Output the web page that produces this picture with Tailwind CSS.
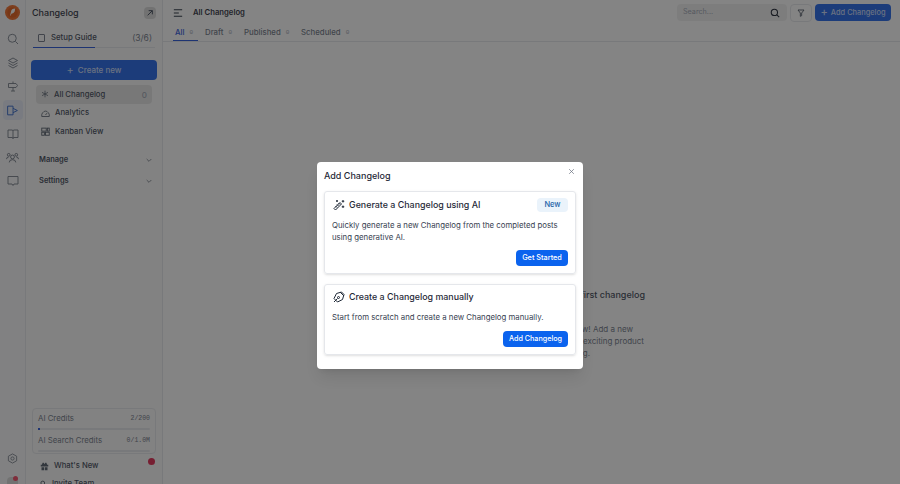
<!DOCTYPE html>
<html><head><meta charset="utf-8"><script src="https://cdn.jsdelivr.net/npm/@tailwindcss/browser@4"></script></head>
<body class="font-['Inter',sans-serif] overflow-hidden">
<div class="relative w-[900px] h-[484px] overflow-hidden bg-white flex text-[#1f2937]">
  <!-- rail -->
  <aside class="w-[26px] h-full shrink-0 border-r border-gray-200 flex flex-col items-center bg-[#f8f9fa] relative">
    <svg class="mt-[5px] shrink-0" width="15" height="15" viewBox="0 0 15 15"><circle cx="7.5" cy="7.5" r="7.5" fill="#f0641e"/><circle cx="7.5" cy="7.5" r="5.2" fill="#e2550f"/><path d="M4.8 11.6 6.3 5.6Q6.9 3.4 10.2 3.4L9.7 6.6Q8.8 8.6 6.5 8.7" fill="#fff"/></svg>
    <div class="mt-[9px] flex flex-col items-center gap-[3.7px] text-[#6b7280]">
      <div class="w-5 h-5 flex items-center justify-center"><svg width="12" height="12" viewBox="0 0 24 24" fill="none" stroke="currentColor" stroke-width="1.8"><circle cx="10.5" cy="10.5" r="8"/><path d="m17 17 5 5"/></svg></div>
      <div class="w-5 h-5 flex items-center justify-center"><svg width="12" height="12" viewBox="0 0 24 24" fill="none" stroke="currentColor" stroke-width="1.8"><path d="m12 2 9 5-9 5-9-5z"/><path d="m3 12 9 5 9-5M3 17l9 5 9-5"/></svg></div>
      <div class="w-5 h-5 flex items-center justify-center"><svg width="12" height="12" viewBox="0 0 24 24" fill="none" stroke="currentColor" stroke-width="1.8"><path d="M12 3v4M12 15v7M3 7h15l3 4-3 4H3zM8 22h8"/></svg></div>
      <div class="w-[20px] h-[20px] rounded bg-[#e6ecf8] flex items-center justify-center text-[#2c62c8]"><svg width="13" height="13" viewBox="0 0 24 24" fill="none" stroke="currentColor" stroke-width="1.8"><path d="M3 4h10v16H3zM13 8l8 4-8 4"/></svg></div>
      <div class="w-5 h-5 flex items-center justify-center"><svg width="12" height="12" viewBox="0 0 24 24" fill="none" stroke="currentColor" stroke-width="1.8"><path d="M2 4h8q2 0 2 2 0-2 2-2h8v15h-8q-2 0-2 2 0-2-2-2H2zM12 6v15"/></svg></div>
      <div class="w-5 h-5 flex items-center justify-center"><svg width="13" height="13" viewBox="0 0 24 24" fill="none" stroke="currentColor" stroke-width="1.8"><circle cx="12" cy="11" r="3.5"/><circle cx="5" cy="7" r="2.5"/><circle cx="19" cy="7" r="2.5"/><path d="M6 21q0-5 6-5t6 5M1 15q0-4 4-4M23 15q0-4-4-4"/></svg></div>
      <div class="w-5 h-5 flex items-center justify-center"><svg width="12" height="12" viewBox="0 0 24 24" fill="none" stroke="currentColor" stroke-width="1.8"><path d="M2 3h20v15H14l-2 3-2-3H2z"/></svg></div>
    </div>
    <div class="mt-auto flex flex-col items-center text-[#6b7280] -mb-[7px] gap-[13px]">
      <svg width="11" height="11" viewBox="0 0 24 24" fill="none" stroke="currentColor" stroke-width="1.8"><circle cx="12" cy="12" r="3.5"/><path d="m12 2 9 5v10l-9 5-9-5V7z"/></svg>
      <div class="w-[11px] h-[14px] bg-[#d8d8d8] rounded-t relative"><span class="absolute -top-px right-0 w-[5px] h-[5px] bg-[#f43f5e] rounded-full"></span></div>
    </div>
  </aside>
  <!-- panel -->
  <aside class="w-[137px] h-full shrink-0 border-r border-gray-200 flex flex-col bg-[#fafafa] relative">
    <div class="h-[25px] pl-[6px] pr-[6px] flex items-center justify-between shrink-0">
      <span class="text-[9px] font-medium text-[#1f2937]">Changelog</span>
      <span class="w-[12px] h-[12px] rounded-sm bg-[#d8d8d8] flex items-center justify-center"><svg width="8" height="8" viewBox="0 0 24 24" fill="none" stroke="#374151" stroke-width="3"><path d="M5 19 19 5M8 5h11v11"/></svg></span>
    </div>
    <div class="mx-[7px] mt-[4px] h-[19px] flex items-center justify-between border-b border-gray-200 relative text-[7.8px] pr-[3px]">
      <span class="flex items-center gap-[6px] pl-[5px] font-medium text-[#374151]"><span class="w-[7px] h-[8px] border border-gray-500 rounded-[1px]"></span>Setup Guide</span>
      <span class="text-gray-500 text-[8.5px]">(3/6)</span>
      <span class="absolute left-0 bottom-[-1px] w-[62px] h-[1.5px] bg-[#1d4ed8]"></span>
    </div>
    <div class="ml-[5px] mr-[5px] mt-[12px] h-[20px] rounded bg-[#1a5fe8] flex items-center justify-center text-[8px] font-medium text-[#c4d7f8] gap-1 shrink-0"><span class="text-[11px] leading-none font-normal">+</span>Create new</div>
    <nav class="mx-[10px] mt-[5px] text-[7.7px] text-[#374151] font-medium">
      <div class="h-[19px] rounded bg-[#e5e5e5] flex items-center justify-between px-[5px]"><span class="flex items-center gap-[5px]"><svg width="8" height="8" viewBox="0 0 24 24" fill="none" stroke="#4b5563" stroke-width="2.2"><path d="M12 2v20M3 7l18 10M21 7 3 17"/></svg>All Changelog</span><span class="text-gray-400 text-[8px]">0</span></div>
      <div class="h-[18.5px] flex items-center gap-[5px] px-[5px]"><svg width="9" height="9" viewBox="0 0 24 24" fill="none" stroke="#4b5563" stroke-width="2.2"><path d="M2 20v-5a7 7 0 0 1 4-6 7 7 0 0 1 12 0 7 7 0 0 1 4 6v5zM12 16l4-5"/></svg>Analytics</div>
      <div class="h-[18.5px] flex items-center gap-[5px] px-[5px]"><svg width="9" height="9" viewBox="0 0 24 24" fill="none" stroke="#4b5563" stroke-width="2.4"><rect x="2" y="3" width="12" height="8"/><rect x="17" y="3" width="5" height="8"/><rect x="2" y="14" width="7" height="8"/><rect x="12" y="14" width="10" height="8"/></svg>Kanban View</div>
    </nav>
    <div class="ml-[13px] mr-[9px] mt-[8px] text-[7.5px] font-semibold text-[#374151]">
      <div class="h-[21px] flex items-center justify-between">Manage<svg width="8" height="8" viewBox="0 0 24 24" fill="none" stroke="#6b7280" stroke-width="2.5"><path d="m5 9 7 7 7-7"/></svg></div>
      <div class="h-[21px] flex items-center justify-between">Settings<svg width="8" height="8" viewBox="0 0 24 24" fill="none" stroke="#6b7280" stroke-width="2.5"><path d="m5 9 7 7 7-7"/></svg></div>
    </div>
    <div class="mt-auto mx-[6px] border border-gray-200 rounded px-[5px] pt-[3px] h-[46px] text-[7.8px] text-gray-500 shrink-0">
      <div class="flex justify-between items-center h-[13px]"><span>AI Credits</span><span class="font-['Liberation_Mono',monospace] text-[6.5px]">2/200</span></div>
      <div class="h-[2px] mt-[3px] rounded bg-gray-200"><div class="h-full w-[2px] bg-[#1d4ed8]"></div></div>
      <div class="flex justify-between items-center h-[13px] mt-[4px]"><span>AI Search Credits</span><span class="font-['Liberation_Mono',monospace] text-[6.5px]">0/1.0M</span></div>
      <div class="h-[2px] mt-[3px] rounded bg-gray-200"></div>
    </div>
    <div class="mx-[14px] mt-[3px] h-[18px] relative flex items-center gap-[5px] text-[7.7px] font-medium text-[#374151] shrink-0"><svg width="9" height="9" viewBox="0 0 24 24" fill="#4b5563"><path d="M7 2h3l2 4 2-4h3l2 5h3v5H2V7h3zM4 14h7v8H4zM13 14h7v8h-7z"/></svg>What's New<span class="absolute right-[-7px] top-[1px] w-[7px] h-[7px] rounded-full bg-[#e11d48]"></span></div>
    <div class="mx-[13px] h-[18px] flex items-center gap-[4px] text-[7.7px] font-medium text-[#374151] shrink-0 -mb-[9px]"><svg width="9" height="9" viewBox="0 0 24 24" fill="none" stroke="#4b5563" stroke-width="2.5"><circle cx="10" cy="8" r="5"/><path d="M2 22q0-7 8-7"/></svg>Invite Team</div>
  </aside>
  <!-- main -->
  <main class="flex-1 min-w-0 flex flex-col">
    <header class="h-[25px] flex items-center pl-[10px] pr-[9px] shrink-0">
      <svg width="10" height="10" viewBox="0 0 24 24" fill="none" stroke="#1f2937" stroke-width="2.5"><path d="M2 4h20M2 12h12M2 20h20"/></svg>
      <span class="ml-[10px] text-[7.7px] font-semibold text-[#1f2937]">All Changelog</span>
      <div class="ml-auto w-[110px] h-[17px] rounded bg-[#f0f0f0] flex items-center justify-between pl-[6px] pr-[7px] text-[7.2px] text-gray-400">Search...<svg width="10" height="10" viewBox="0 0 24 24" fill="none" stroke="#111827" stroke-width="2.5"><circle cx="10.5" cy="10.5" r="7.5"/><path d="m16 16 6 6"/></svg></div>
      <div class="ml-[3px] w-[22px] h-[18px] rounded border border-gray-200 flex items-center justify-center"><svg width="8" height="8" viewBox="0 0 24 24" fill="none" stroke="#374151" stroke-width="2.5"><path d="M3 3h18l-7 9v8l-4 2V12z"/></svg></div>
      <div class="ml-[3px] w-[76px] h-[17px] rounded bg-[#1a5fe8] flex items-center justify-center gap-[3px] text-[7.4px] font-medium text-[#c4d7f8]"><span class="text-[11px] leading-none">+</span>Add Changelog</div>
    </header>
    <div class="h-[16px] border-b border-gray-200 flex items-start pl-[10px] text-[7.8px] font-medium text-gray-500 shrink-0 box-content">
      <span class="relative text-[#1d4ed8] h-full w-[25px] pl-[2px] pt-[2px] flex gap-[5px] mr-[7px]">All <span class="font-['Liberation_Mono',monospace] text-[6px] pt-[1px] text-gray-400">0</span><span class="absolute left-0 right-0 bottom-0 h-[1.5px] bg-[#1d4ed8]"></span></span>
      <span class="pt-[2px] flex gap-[5px] w-[39px]">Draft <span class="font-['Liberation_Mono',monospace] text-[6px] pt-[1px] text-gray-400">0</span></span>
      <span class="pt-[2px] flex gap-[5px] w-[57px]">Published <span class="font-['Liberation_Mono',monospace] text-[6px] pt-[1px] text-gray-400">0</span></span>
      <span class="pt-[2px] flex gap-[5px]">Scheduled <span class="font-['Liberation_Mono',monospace] text-[6px] pt-[1px] text-gray-400">0</span></span>
    </div>
    <div class="flex-1 relative">
      <div class="ml-[240px] w-[242px] mt-[245px] text-right text-[#374151]">
        <div class="text-[9px] font-medium leading-[16px]">Create your first changelog</div>
        <p class="mt-[20px] text-[8px] leading-[12px] text-gray-500"><span class="block pr-[12px]">Nothing to show just yet for now! Add a new</span><span class="block pr-[1px]">changelog to share your exciting product</span><span class="block pr-[55px]">news and start logging.</span></p>
      </div>
    </div>
  </main>
  <!-- overlay -->
  <div class="absolute inset-0 bg-[#1f1f1f]/55 flex items-start justify-center pt-[162px]">
    <div class="w-[266px] h-[207px] rounded-[4px] bg-white shadow-lg relative px-[7px] pt-[7px] text-[#1f2937]">
      <svg class="absolute right-[8px] top-[6px]" width="7" height="7" viewBox="0 0 24 24" fill="none" stroke="#6b7280" stroke-width="2.5"><path d="M4 4l16 16M20 4 4 20"/></svg>
      <h2 class="text-[9px] font-medium leading-[14px]">Add Changelog</h2>
      <section class="mt-[8px] h-[83px] border border-gray-200 rounded-[3px] shadow-sm px-[7px] pt-[6px] relative">
        <div class="flex items-center h-[14px]">
          <svg class="ml-px" width="12" height="12" viewBox="0 0 24 24" fill="none" stroke="#1f2937" stroke-width="2"><path d="M2 19 14 7l3 3L5 22zM5 14l3 3M8 11l3 3M11 8l3 3M20 2v5M22.500 4.500h-5M8 2v4M10 4H6M20 13v5M22.500 15.500h-5"/></svg>
          <span class="ml-[4px] text-[8.9px] font-medium">Generate a Changelog using AI</span>
          <span class="ml-auto w-[31px] h-[14px] rounded bg-[#eaf3fb] text-[7.5px] font-medium text-[#2563a8] flex items-center justify-center">New</span>
        </div>
        <p class="mt-[8px] text-[7.8px] leading-[11.5px] text-[#374151]">Quickly generate a new Changelog from the completed posts<br>using generative AI.</p>
        <div class="absolute right-[7px] bottom-[7px] h-[16px] w-[52px] rounded bg-[#0b63ee] text-white text-[7.3px] font-medium flex items-center justify-center">Get Started</div>
      </section>
      <section class="mt-[10px] h-[71px] border border-gray-200 rounded-[3px] shadow-sm px-[7px] pt-[5px] relative">
        <div class="flex items-center h-[14px]">
          <svg class="ml-px" width="12" height="12" viewBox="0 0 24 24" fill="none" stroke="#1f2937" stroke-width="2"><path d="M7 5 17 2l5 5-3 10-10 5-7-7zM2 22l7-7M14 2l8 8"/><circle cx="11" cy="13" r="2"/></svg>
          <span class="ml-[4px] text-[8.9px] font-medium">Create a Changelog manually</span>
        </div>
        <p class="mt-[8px] text-[7.8px] leading-[11.5px] text-[#374151]">Start from scratch and create a new Changelog manually.</p>
        <div class="absolute right-[7px] bottom-[7px] h-[16px] w-[65px] rounded bg-[#0b63ee] text-white text-[7.2px] font-medium flex items-center justify-center">Add Changelog</div>
      </section>
    </div>
  </div>
</div>
</body></html>
